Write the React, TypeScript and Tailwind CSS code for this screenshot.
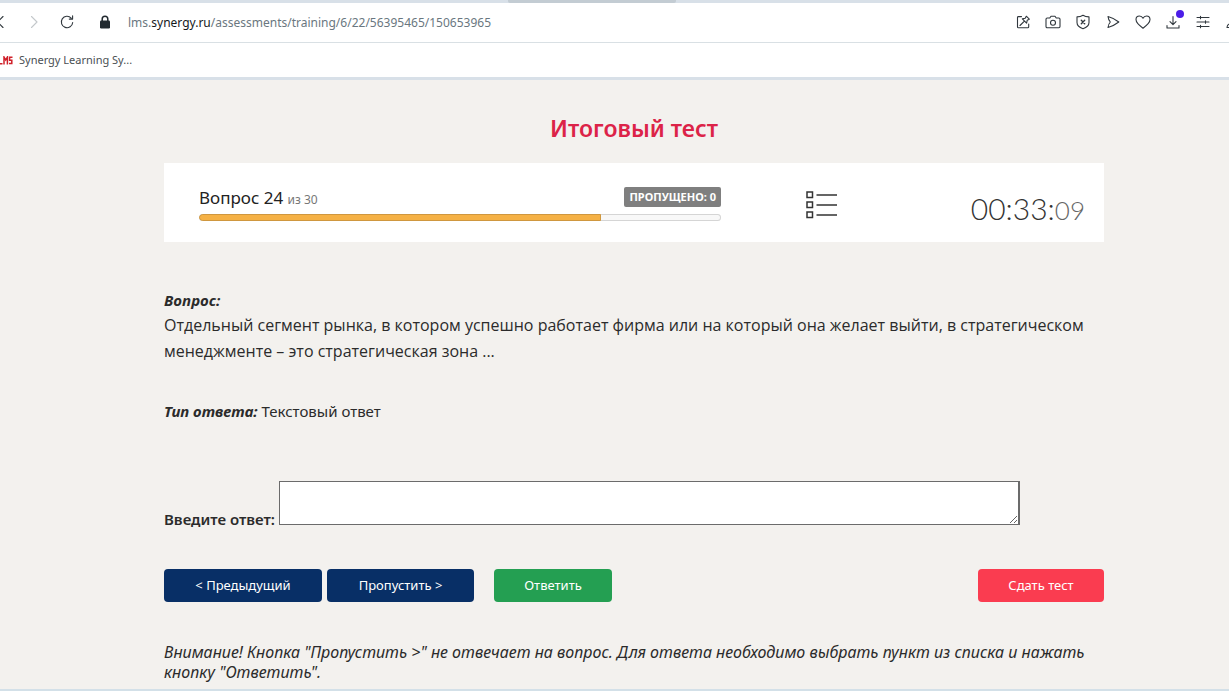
import { useState, type ReactNode } from 'react';

const CURRENT = 24;
const TOTAL = 30;
const PROGRESS = 77;

function Icon({ children }: { children: ReactNode }) {
  return (
    <svg
      width="16"
      height="16"
      viewBox="0 0 16 16"
      fill="none"
      stroke="currentColor"
      strokeWidth="1.1"
      strokeLinecap="round"
      strokeLinejoin="round"
      aria-hidden="true"
    >
      {children}
    </svg>
  );
}

const tools = [
  {
    label: 'Закрепить',
    icon: (
      <>
        <path d="M6.5 2.6H3.4c-.5 0-.9.4-.9.9v9.400c0 .5.4.9.9.9h9.400c.5 0 .9-.4.9-.9V10" />
        <path d="M11.300 2.200l3 3-2.100 1.100-.6 2.900-4.300-4.300 2.900-.6zM9.400 7.100L5 11.500" />
      </>
    ),
  },
  {
    label: 'Снимок страницы',
    icon: (
      <>
        <path d="M2.200 4h2.600L6 2.200h4L11.200 4h2.600c.7 0 1.200.5 1.200 1.200v7.300c0 .7-.5 1.200-1.200 1.200H2.200c-.7 0-1.200-.5-1.200-1.200V5.200C1 4.500 1.500 4 2.200 4z" />
        <circle cx="8" cy="8.700" r="2.500" />
      </>
    ),
  },
  {
    label: 'Блокировка',
    icon: (
      <>
        <path d="M8 1.300C6.200 2.500 4 2.900 2 2.900v5.600c0 3 2.500 5 6 6.200 3.500-1.200 6-3.200 6-6.200V2.900c-2 0-4.200-.4-6-1.600z" />
        <path d="M6.300 6.300l3.400 3.400M9.700 6.300L6.300 9.700" strokeWidth="1.400" />
      </>
    ),
  },
  { label: 'Отправить', icon: <path d="M3 2.500c3.800 1 7.500 3 10.800 5.500C10.500 10.500 6.800 12.500 3 13.500c.2-2 1-4 2.300-5.500C4 6.500 3.200 4.500 3 2.500z" /> },
  {
    label: 'В избранное',
    icon: (
      <path d="M8 14.200C4.500 11.700 1 8.800 1 5.600 1 3.500 2.600 2 4.500 2 6 2 7.300 2.900 8 4.300 8.700 2.900 10 2 11.500 2 13.400 2 15 3.500 15 5.600c0 3.200-3.500 6.100-7 8.600z" />
    ),
  },
  {
    label: 'Загрузки',
    badge: true,
    icon: <path d="M8 2.500v8M5 7.700l3 3 3-3M2 11.500V14h12v-2.500" />,
  },
  {
    label: 'Настройки',
    icon: <path d="M2 3.500h12M2 8h12M2 12.500h12M5.500 2.300v2.400M10.500 6.800v2.400M5.500 11.300v2.400" />,
  },
  { label: 'Профиль', icon: <path d="M2 13.500c0-3 2.500-4 6-4s6 1 6 4z" /> },
];

function Toolbar() {
  return (
    <div className="flex h-10 items-center justify-between overflow-hidden border-b border-[#d9e0e4] bg-white pb-px text-[#30373d]">
      <div className="flex items-center">
        <button type="button" aria-label="Назад" className="-ml-4 flex w-8 justify-center">
          <Icon>
            <path d="M11 2.500L5.500 8l5.500 5.500" />
          </Icon>
        </button>
        <button type="button" aria-label="Вперёд" className="flex w-9 justify-center text-[#c4c8cb]">
          <Icon>
            <path d="M5.500 2.500L11 8l-5.500 5.500" />
          </Icon>
        </button>
        <button type="button" aria-label="Обновить" className="flex w-[30px] justify-center">
          <Icon>
            <path d="M13.700 8.500a5.700 5.700 0 1 1-1.500-4.400M13.600 1.800v3.300h-3.300" />
          </Icon>
        </button>
        <svg width="12" height="14" viewBox="0 0 12 14" className="mx-[17px]" aria-hidden="true">
          <rect x="1" y="5.500" width="10" height="8" rx="1.200" fill="#222a30" />
          <path d="M3.200 6V4a2.800 2.800 0 0 1 5.600 0v2" fill="none" stroke="#222a30" strokeWidth="1.500" />
        </svg>
        <a href="#" className="pt-px text-xs text-[#6a7780]">
          lms.<span className="text-[#15191c]">synergy.ru</span>/assessments/training/6/22/56395465/150653965
        </a>
      </div>
      <div className="-mr-[19px] flex">
        {tools.map((t) => (
          <button key={t.label} type="button" aria-label={t.label} className="relative flex w-[30px] justify-center">
            <Icon>{t.icon}</Icon>
            {t.badge && <span className="absolute -top-1 right-1 size-2 rounded-full bg-[#4c1de8]" />}
          </button>
        ))}
      </div>
    </div>
  );
}

function Bookmarks() {
  return (
    <nav className="flex h-[34px] items-center bg-white text-[11px] text-[#4a4f53]">
      <a href="#" className="flex items-center gap-1.5">
        <svg width="13" height="9" viewBox="0 0 13 9" fill="none" stroke="#d0202a" strokeWidth="1.500" aria-hidden="true">
          <path d="M0 7.700h2.500M4 8.500V1l1.700 3L7.400 1v7.500M12.500 1.300H9.600v2.900h2.200v3.400H9" />
        </svg>
        Synergy Learning Sy...
      </a>
    </nav>
  );
}

function TestHeader() {
  return (
    <section className="flex h-[79px] items-center bg-white pt-1 pr-[19px] pl-[35px]">
      <div className="w-[522px] pb-0.5">
        <div className="flex items-end justify-between">
          <p className="text-[17px] leading-6 text-[#222]">
            Вопрос {CURRENT} <span className="text-xs text-[#777]">из {TOTAL}</span>
          </p>
          <span className="mb-[3px] rounded-xs bg-[#7f7f7f] px-[5px] text-[11px] leading-5 font-bold text-white">
            ПРОПУЩЕНО: 0
          </span>
        </div>
        <div className="mt-1 h-[7px] overflow-hidden rounded-full bg-[#f8f8f8] inset-ring inset-ring-[#d5d5d5]">
          <div
            className="h-full rounded-l-full border border-[#cf973f] bg-[#f5b145]"
            style={{ width: `${PROGRESS}%` }}
          />
        </div>
      </div>
      <button type="button" aria-label="Список вопросов" className="ml-[85px]">
        <svg width="32" height="28" viewBox="0 0 32 28" fill="none" stroke="#333" strokeWidth="1.500" aria-hidden="true">
          <path d="M1 1h5.500v5.500H1zM1 11h5.500v5.500H1zM1 21h5.500v5.500H1zM10.500 4H31M10.500 14H31M10.500 24H31" />
        </svg>
      </button>
      <p className="ml-auto pt-2 font-[Lato] text-[30px] font-light text-[#333]">
        00:33:<span className="text-[26px] text-[#666]">09</span>
      </p>
    </section>
  );
}

export default function App() {
  const [answer, setAnswer] = useState('');

  return (
    <div className="flex min-h-screen flex-col overflow-hidden bg-[#f3f1ee] font-['Noto_Sans',sans-serif] text-[#2b2b2b]">
      <header className="border-b-3 border-[#d8e0e8]">
        <div className="flex h-[3px] justify-center bg-[#d8e0e8]">
          <div className="ml-[-46px] w-[168px] rounded-b-xs bg-[#c3ccd3]" />
        </div>
        <Toolbar />
        <Bookmarks />
      </header>

      <main className="pl-[39px]">
        <div className="mx-auto max-w-[940px] pt-8">
          <h1 className="text-center text-[23px] leading-8 font-semibold text-[#dc2348]">Итоговый тест</h1>
          <div className="mt-[19px]">
            <TestHeader />
          </div>

          <div className="mt-[46px] font-['Open_Sans',sans-serif] text-[16px] leading-[26px]">
            <strong className="block text-[15px] leading-6 italic">Вопрос:</strong>
            Отдельный сегмент рынка, в котором успешно работает фирма или на который она желает выйти, в
            стратегическом менеджменте – это стратегическая зона ...
          </div>

          <p className="mt-[35px] text-[15px] leading-6">
            <strong className="italic">Тип ответа:</strong> Текстовый ответ
          </p>

          <div className="mt-[58px] flex items-end gap-1">
            <label htmlFor="answer" className="text-[15px] leading-3 font-semibold">
              Введите ответ:
            </label>
            <textarea
              id="answer"
              value={answer}
              onChange={(e) => setAnswer(e.target.value)}
              className="h-11 w-[741px] resize border border-r-2 border-[#6b6b6b] bg-white p-1 outline-none"
            />
          </div>

          <div className="mt-11 flex text-[13px] text-white">
            <button type="button" className="mr-[5px] h-[33px] w-[158px] rounded-sm bg-[#082f66]">
              &lt; Предыдущий
            </button>
            <button type="button" className="mr-5 h-[33px] w-[147px] rounded-sm bg-[#082f66]">
              Пропустить &gt;
            </button>
            <button type="button" className="h-[33px] w-[118px] rounded-sm bg-[#249f52]">
              Ответить
            </button>
            <button type="button" className="ml-auto h-[33px] w-[126px] rounded-sm bg-[#fa3c50]">
              Сдать тест
            </button>
          </div>

          <p className="mt-10 text-[16px] leading-5 italic">
            Внимание! Кнопка "Пропустить &gt;" не отвечает на вопрос. Для ответа необходимо выбрать пункт из списка
            и нажать кнопку "Ответить".
          </p>
        </div>
      </main>
      <footer className="mt-auto h-0.5 bg-[#d3e0e8]" />
    </div>
  );
}
